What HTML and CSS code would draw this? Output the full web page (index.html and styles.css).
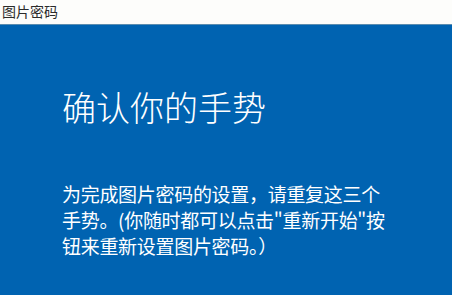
FILE: index.html
```html
<!DOCTYPE html>
<html lang="zh-CN">
<head>
  <meta charset="UTF-8">
  <meta name="viewport" content="width=device-width, initial-scale=1.0">
  <title>图片密码</title>
  <link rel="stylesheet" href="styles.css">
</head>
<body>
  <!-- Window title -->
  <div class="title-bar">图片密码</div>

  <!-- Setup panel -->
  <div class="panel">
    <h1 class="heading">确认你的手势</h1>
    <p class="message">为完成图片密码的设置，请重复这三个<br>手势。(你随时都可以点击"重新开始"按<br>钮来重新设置图片密码。）</p>
  </div>
</body>
</html>
```

FILE: styles.css
```css
body {
  margin: 0;
  padding: 0;
  height: 295px;
  overflow: hidden;
  font-family: "Noto Sans CJK SC", "Microsoft YaHei", sans-serif;
  background-color: #0063b1;
}

.title-bar {
  height: 24px;
  line-height: 22px;
  padding-left: 2px;
  font-size: 14px;
  color: #2b2b2b;
  background-color: #fdfdfb;
  border-bottom: 1px solid #5b8db0;
}

.panel {
  padding: 65px 0 0 62px;
  color: #ffffff;
}

.heading {
  margin: 0;
  font-size: 34px;
  font-weight: 300;
  line-height: 34px;
}

.message {
  margin: 57px 0 0;
  white-space: nowrap;
  font-size: 19px;
  line-height: 26px;
  letter-spacing: -0.3px;
}
```
